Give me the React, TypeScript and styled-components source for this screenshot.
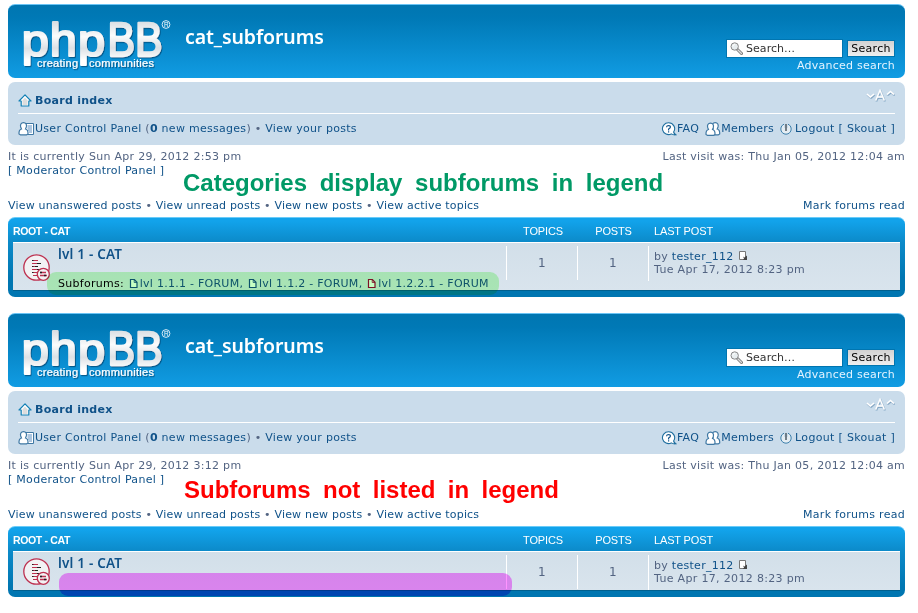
import React from "react";
import styled, { createGlobalStyle } from "styled-components";

const GlobalStyle = createGlobalStyle`
  * { box-sizing: border-box; }
  body {
    margin: 0;
    background: #fff;
    color: #536482;
    font: 11px/14px "DejaVu Sans", Verdana, sans-serif;
    letter-spacing: 0.28px;
  }
`;

const Page = styled.div`
  width: 918px;
  height: 613px;
  overflow: hidden;
  padding: 4px 13px 0 8px;
`;

const Board = styled.section`
  position: relative;
  height: 309px;
`;

const HeaderBar = styled.header`
  display: flex;
  height: 74px;
  padding: 0 10px 0 13px;
  border-top: 1px solid #6ac4f5;
  border-radius: 7px;
  background: linear-gradient(#0076b1, #0079b6 18%, #119ce3);
`;

const LogoSlot = styled.div`
  width: 154px;
  height: 60px;
  padding-top: 9px;
`;

const SiteTitle = styled.h1`
  flex: 1;
  margin: 20px 0 0 10px;
  color: #fff;
  font: 600 19.5px/24px "Noto Sans", "Open Sans", sans-serif;
  letter-spacing: -0.1px;
`;

const SearchArea = styled.form`
  display: flex;
  flex-direction: column;
  align-items: flex-end;
  padding-top: 34px;
`;

const SearchLine = styled.div`
  display: flex;
  align-items: center;
  gap: 4px;
`;

const SearchField = styled.div`
  display: flex;
  align-items: center;
  gap: 3px;
  width: 117px;
  height: 19px;
  padding: 1px 0 0 3px;
  border: 1px solid #0075b0;
  background: #fff;
  color: #333;
  letter-spacing: 0.05px;
`;

const SearchButton = styled.button`
  width: 48px;
  height: 17px;
  padding: 0;
  border: 1px solid #0075b0;
  background: linear-gradient(#d2d2d2, #efefef);
  color: #000;
  font: inherit;
  letter-spacing: 0.3px;
`;

const AdvancedLink = styled.a`
  color: #e3f3ff;
  line-height: 15px;
  letter-spacing: 0.24px;
`;

const NavBar = styled.nav`
  height: 63px;
  margin-top: 4px;
  padding: 0 10px;
  border-radius: 7px;
  background: #cadceb;
`;

const NavRow = styled.div<{ $tall?: boolean }>`
  display: flex;
  align-items: center;
  justify-content: space-between;
  height: ${(p) => (p.$tall ? 32 : 29)}px;
  padding-top: ${(p) => (p.$tall ? 5 : 0)}px;
  border-bottom: ${(p) => (p.$tall ? "1px solid #fff" : "0")};
`;

const SizeSlot = styled.div`
  height: 24px;
`;

const Group = styled.div<{ $gap?: number }>`
  display: flex;
  align-items: center;
  gap: ${(p) => p.$gap ?? 0}px;
  white-space: pre;
`;

const Link = styled.a<{ $bold?: boolean }>`
  color: #105289;
  font-weight: ${(p) => (p.$bold ? 700 : 400)};
  padding-top: ${(p) => (p.$bold ? 1 : 0)}px;
`;

const InfoRow = styled.div<{ $top: number }>`
  display: flex;
  justify-content: space-between;
  padding-top: ${(p) => p.$top}px;
  white-space: pre;
`;

const Tracked = styled.span<{ $by: number }>`
  letter-spacing: ${(p) => p.$by}px;
`;

const ForumList = styled.div<{ $row: number }>`
  height: ${(p) => p.$row + 31}px;
  margin-top: 4px;
  padding: 0 5px;
  border-top: 1px solid #6acbf8;
  border-radius: 7px;
  background: linear-gradient(#12a3eb, #12a3eb 3px, #0c8ac9 24px, #0076b1 60px);
`;

const columns = "493px 71px 71px 1fr";

const ListHead = styled.div`
  display: grid;
  grid-template-columns: ${columns};
  height: 24px;
  padding-top: 6px;
  color: #fff;
  font: 11px/14px "Liberation Sans", Arial, sans-serif;
  letter-spacing: 0;
`;

const HeadCell = styled.span<{ $align?: string; $bold?: boolean; $indent?: number }>`
  padding-left: ${(p) => p.$indent ?? 0}px;
  text-align: ${(p) => p.$align ?? "left"};
  font-size: ${(p) => (p.$bold ? 10.5 : 11)}px;
  font-weight: ${(p) => (p.$bold ? 700 : 400)};
  letter-spacing: ${(p) => (p.$bold ? -0.35 : -0.15)}px;
`;

const ListRow = styled.div<{ $height: number }>`
  display: grid;
  grid-template-columns: ${columns};
  height: ${(p) => p.$height}px;
  padding-top: 3px;
  border-top: 1px solid #fff;
  border-bottom: 1px solid #00608f;
  background: linear-gradient(#d2dfe9, #d9e4ed);
`;

const ForumCell = styled.div`
  display: flex;
`;

const IconSlot = styled.div<{ $top: number }>`
  width: 45px;
  padding: ${(p) => p.$top}px 0 0 10px;
`;

const ForumText = styled.div`
  display: flex;
  flex-direction: column;
  white-space: pre;
`;

const ForumTitle = styled.a`
  color: #105289;
  font: 600 13.5px/17px "Noto Sans", "Open Sans", sans-serif;
  letter-spacing: 0.2px;
`;

const Subforums = styled.div`
  display: flex;
  align-items: center;
  margin-top: 14px;
  height: 14px;
  color: #000;
`;

const SubforumLink = styled(Link)`
  margin-left: 1px;
  letter-spacing: 0.26px;
`;

const StatCell = styled.div`
  height: 34px;
  border-left: 1px solid #fff;
  font-size: 12px;
  line-height: 35px;
  text-align: center;
`;

const LastPostCell = styled.div`
  height: 35px;
  padding: 4px 0 0 5px;
  border-left: 1px solid #fff;
  line-height: 13px;
  white-space: pre;
`;

const Marker = styled.div<{ $x: number; $y: number; $w: number; $color: string }>`
  position: absolute;
  left: ${(p) => p.$x}px;
  top: ${(p) => p.$y}px;
  width: ${(p) => p.$w}px;
  height: 23px;
  border-radius: 9px;
  background: ${(p) => p.$color};
  mix-blend-mode: multiply;
`;

const Caption = styled.div<{ $x: number; $y: number; $color: string; $word: number }>`
  position: absolute;
  left: ${(p) => p.$x}px;
  top: ${(p) => p.$y}px;
  color: ${(p) => p.$color};
  font: 700 24px/28px "Liberation Sans", Arial, sans-serif;
  letter-spacing: 0;
  word-spacing: ${(p) => p.$word}px;
  white-space: nowrap;
`;

const Logo = ({ id }: { id: string }) => (
  <svg width="154" height="60" viewBox="21 14 154 60" letterSpacing="0">
    <defs>
      <linearGradient id={id} x1="0" y1="-36" x2="0" y2="11" gradientUnits="userSpaceOnUse">
        <stop offset="0" stopColor="#d3d8dd" />
        <stop offset="0.35" stopColor="#fbfcfc" />
        <stop offset="0.6" stopColor="#dde1e5" />
        <stop offset="0.85" stopColor="#ffffff" />
      </linearGradient>
      <filter id={id + "s"} x="-10%" y="-10%" width="120%" height="130%">
        <feDropShadow dx="1" dy="1.2" stdDeviation="0.6" floodColor="#004a78" floodOpacity="0.75" />
      </filter>
    </defs>
    <g
      filter={`url(#${id}s)`}
      fill={`url(#${id})`}
      stroke={`url(#${id})`}
      strokeWidth="2.2"
      strokeLinejoin="round"
      fontFamily="Liberation Sans, Arial, sans-serif"
      fontSize="46"
    >
      <text transform="translate(21.700 56) scale(1.060 .98)">p</text>
      <text transform="translate(49.700 56) scale(1.060 1.020)">h</text>
      <text transform="translate(78 56) scale(1.060 .98)">p</text>
      <text transform="translate(107.500 56) scale(.9 1.050)">B</text>
      <text transform="translate(135 56) scale(.9 1.050)">B</text>
    </g>
    <g filter={`url(#${id}s)`} fill="#fff" fontFamily="Liberation Sans, Arial, sans-serif" fontSize="11" stroke="#fff" strokeWidth="0.200">
      <text x="37" y="67" textLength="41">creating</text>
      <text x="89" y="67" textLength="65">communities</text>
    </g>
    <circle cx="166" cy="24.500" r="3.900" fill="none" stroke="#d5eaf7" strokeWidth="1" />
    <text x="163.900" y="27" fill="#fff" fontFamily="Liberation Sans, sans-serif" fontSize="6.500">R</text>
  </svg>
);

const GlassIcon = () => (
  <svg width="13" height="14" viewBox="0 0 13 14">
    <path d="M7.500 7.500l4 4" stroke="#777" strokeWidth="3" strokeLinecap="round" />
    <path d="M8 8l3.500 3.500" stroke="#ddd" strokeWidth="1.200" strokeLinecap="round" />
    <circle cx="4.700" cy="4.500" r="3.700" fill="#e8eef0" stroke="#888" />
    <path d="M2.800 4.500a2 2 0 0 1 2-2" fill="none" stroke="#fff" />
  </svg>
);

const HomeIcon = () => (
  <svg width="14" height="13" viewBox="0 0 14 13">
    <path d="M7 .8L13 7H10.800V12H3.200V7H1z" fill="#fff" stroke="#1380b5" strokeWidth="1.200" strokeLinejoin="round" />
    <path d="M7 3.500L10 7H9.500v4h-5V7H4z" fill="#ddd" />
  </svg>
);

const Person = ({ x = 0 }: { x?: number }) => (
  <path
    transform={`translate(${x} 0)`}
    d="M5.500 .7C8 .7 9 2.800 8.300 5L7.500 7C9.500 7.500 10.200 9 10 12L8.500 12.900H2.500L1 12C.8 9 1.500 7.500 3.500 7L2.700 5C2 2.800 3 .7 5.500 .7z"
    fill="#fff"
    stroke="#3f78a4"
    strokeWidth="1.200"
  />
);

const UserIcon = () => (
  <svg width="17" height="14" viewBox="0 0 17 14">
    <path d="M7 1.500H15.500V12.500H7z" fill="#fff" stroke="#3f78a4" />
    <path d="M9.500 4h4.500M9.500 6h4.500M10 8h4M11 10h3" stroke="#5a8dc0" />
    <Person />
  </svg>
);

const MembersIcon = () => (
  <svg width="16" height="14" viewBox="0 0 16 14">
    <Person x={4.7} />
    <g transform="translate(0 .5)"><Person /></g>
  </svg>
);

const FaqIcon = () => (
  <svg width="16" height="14" viewBox="0 0 16 14">
    <path d="M7.500.8a6 5.900 0 1 0 2.800 11.100Q12 13 14.800 12.800 13 11.700 12.600 10A6 5.900 0 0 0 7.500.8z" fill="#fff" stroke="#1f6f9f" strokeWidth="1.100" />
    <path d="M5.500 5.200Q5.700 3.500 7.600 3.500 9.500 3.600 9.400 5.200 9.200 6.200 7.600 7V8.400M7.600 9.300v1.300" fill="none" stroke="#105289" strokeWidth="1.200" />
  </svg>
);

const PowerIcon = () => (
  <svg width="12" height="12" viewBox="0 0 12 12">
    <circle cx="6" cy="6" r="5.200" fill="#e5edf3" stroke="#3c7fab" />
    <path d="M6 0v5" stroke="#cadceb" strokeWidth="4" />
    <path d="M6 1v7" stroke="#65727c" strokeWidth="1.800" />
  </svg>
);

const FontSizeIcon = () => (
  <svg width="29" height="16" viewBox="0 0 29 16">
    <defs>
      <filter id="sizeShade" x="-10%" y="-10%" width="130%" height="140%">
        <feDropShadow dx="0.6" dy="1" stdDeviation="0.3" floodColor="#6f9abb" />
      </filter>
    </defs>
    <g filter="url(#sizeShade)">
      <path d="M1 6L4.500 9 8 6M21 6.500L24.500 3.500 28 6.500" fill="none" stroke="#fff" strokeWidth="1.600" />
      <path d="M9.700 12.500L14 2.200 18.300 12.500M11.400 9H16.600" fill="none" stroke="#fff" strokeWidth="1.400" />
    </g>
  </svg>
);

const ForumIcon = () => (
  <svg width="28" height="28" viewBox="0 0 28 28">
    <circle cx="13.500" cy="13.500" r="12.700" fill="#f2f2f4" stroke="#bd3150" strokeWidth="1.300" />
    <g strokeWidth="1">
      <path d="M9 6.500h6M9 9.500h7M9 12.500h4M9 15.500h8M9 18.500h6M10 21.500h5" stroke="#bd3150" />
      <path d="M9 6.500h1.500M14 9.500h4M9 12.500h1.500M14 15.500h3M9 18.500h1.500M12 12.500h3" stroke="#222" />
    </g>
    <circle cx="20.300" cy="20.300" r="6" fill="#f2f2f4" stroke="#bd3150" strokeWidth="1.300" />
    <path d="M17 18.500h6M17 21.500h7" stroke="#bd3150" strokeWidth="1.300" />
    <path d="M17 18.500h2M21 21.500h2" stroke="#222" strokeWidth="1.300" />
  </svg>
);

const PageIcon = ({ color }: { color: string }) => (
  <svg width="11" height="10" viewBox="0 0 11 10">
    <path d="M2.500.5H6.300L9 3.300V8.500H2.500z" fill="#fff" stroke={color} strokeWidth="1.200" />
    <path d="M6.200.5V3.500H9" fill="none" stroke={color} strokeWidth="0.800" />
  </svg>
);

const LatestIcon = () => (
  <svg width="11" height="9" viewBox="0 0 11 9">
    <path d="M2.500.5H8.500V8.500H2.500z" fill="#fff" stroke="#777" />
    <path d="M6 5.500L7.500 6.500 10 4.500V9H6L7 7.500z" fill="#444" />
  </svg>
);

const quickLinks = ["View unanswered posts", "View unread posts", "View new posts", "View active topics"];
const subforums = [
  { name: "lvl 1.1.1 - FORUM", color: "#105289" },
  { name: "lvl 1.1.2 - FORUM", color: "#105289" },
  { name: "lvl 1.2.2.1 - FORUM", color: "#a01030" },
];

interface BoardProps {
  id: string;
  time: string;
  showSubforums?: boolean;
  children: React.ReactNode;
}

const BoardView = ({ id, time, showSubforums, children }: BoardProps) => {
  const rowHeight = showSubforums ? 49 : 40;
  return (
    <Board>
      <HeaderBar>
        <LogoSlot><Logo id={id} /></LogoSlot>
        <SiteTitle>cat_subforums</SiteTitle>
        <SearchArea>
          <SearchLine>
            <SearchField><GlassIcon />Search…</SearchField>
            <SearchButton type="button">Search</SearchButton>
          </SearchLine>
          <AdvancedLink>Advanced search</AdvancedLink>
        </SearchArea>
      </HeaderBar>
      <NavBar>
        <NavRow $tall>
          <Group $gap={3}><HomeIcon /><Link $bold>Board index</Link></Group>
          <SizeSlot><FontSizeIcon /></SizeSlot>
        </NavRow>
        <NavRow>
          <Group><UserIcon /><span><Link>User Control Panel</Link> (<Link><b>0</b> new messages</Link>) • <Link>View your posts</Link></span></Group>
          <Group $gap={6}>
            <Group><FaqIcon /><Link>FAQ</Link></Group>
            <Group><MembersIcon /><Link>Members</Link></Group>
            <Group $gap={3}><PowerIcon /><Tracked $by={0.32}><Link>Logout [ Skouat ]</Link></Tracked></Group>
          </Group>
        </NavRow>
      </NavBar>
      <InfoRow $top={5}>
        <Tracked $by={0.3}>It is currently Sun Apr 29, 2012 {time}</Tracked>
        <span>Last visit was: Thu Jan 05, 2012 12:04 am</span>
      </InfoRow>
      <InfoRow $top={0}><Link>[ Moderator Control Panel ]</Link></InfoRow>
      <InfoRow $top={21}>
        <Tracked $by={0.19}>
          {quickLinks.map((label, i) => (
            <React.Fragment key={label}>{i > 0 && " • "}<Link>{label}</Link></React.Fragment>
          ))}
        </Tracked>
        <Link>Mark forums read</Link>
      </InfoRow>
      <ForumList $row={rowHeight}>
        <ListHead>
          <HeadCell $bold>ROOT - CAT</HeadCell>
          <HeadCell $align="center" $indent={3}>TOPICS</HeadCell>
          <HeadCell $align="center" $indent={2}>POSTS</HeadCell>
          <HeadCell $indent={6}>LAST POST</HeadCell>
        </ListHead>
        <ListRow $height={rowHeight}>
          <ForumCell>
            <IconSlot $top={showSubforums ? 8 : 3}><ForumIcon /></IconSlot>
            <ForumText>
              <ForumTitle>lvl 1 - CAT</ForumTitle>
              {showSubforums && (
                <Subforums>
                  {"Subforums: "}
                  {subforums.map((f, i) => (
                    <Group key={f.name}><PageIcon color={f.color} /><SubforumLink>{f.name}{i < 2 ? ", " : ""}</SubforumLink></Group>
                  ))}
                </Subforums>
              )}
            </ForumText>
          </ForumCell>
          <StatCell>1</StatCell>
          <StatCell>1</StatCell>
          <LastPostCell>
            by <Link>tester_112</Link> <LatestIcon /><br />
            <Tracked $by={0.33}>Tue Apr 17, 2012 8:23 pm</Tracked>
          </LastPostCell>
        </ListRow>
      </ForumList>
      {children}
    </Board>
  );
};

export default function App() {
  return (
    <>
      <GlobalStyle />
      <Page>
        <BoardView id="logoA" time="2:53 pm" showSubforums>
          <Caption $x={175} $y={165} $color="#009966" $word={6}>Categories display subforums in legend</Caption>
          <Marker $x={39} $y={268} $w={452} $color="#c7ffc3" />
        </BoardView>
        <BoardView id="logoB" time="3:12 pm">
          <Caption $x={176} $y={163} $color="#ff0000" $word={5.7}>Subforums not listed in legend</Caption>
          <Marker $x={51} $y={260} $w={453} $color="#ff94ff" />
        </BoardView>
      </Page>
    </>
  );
}
